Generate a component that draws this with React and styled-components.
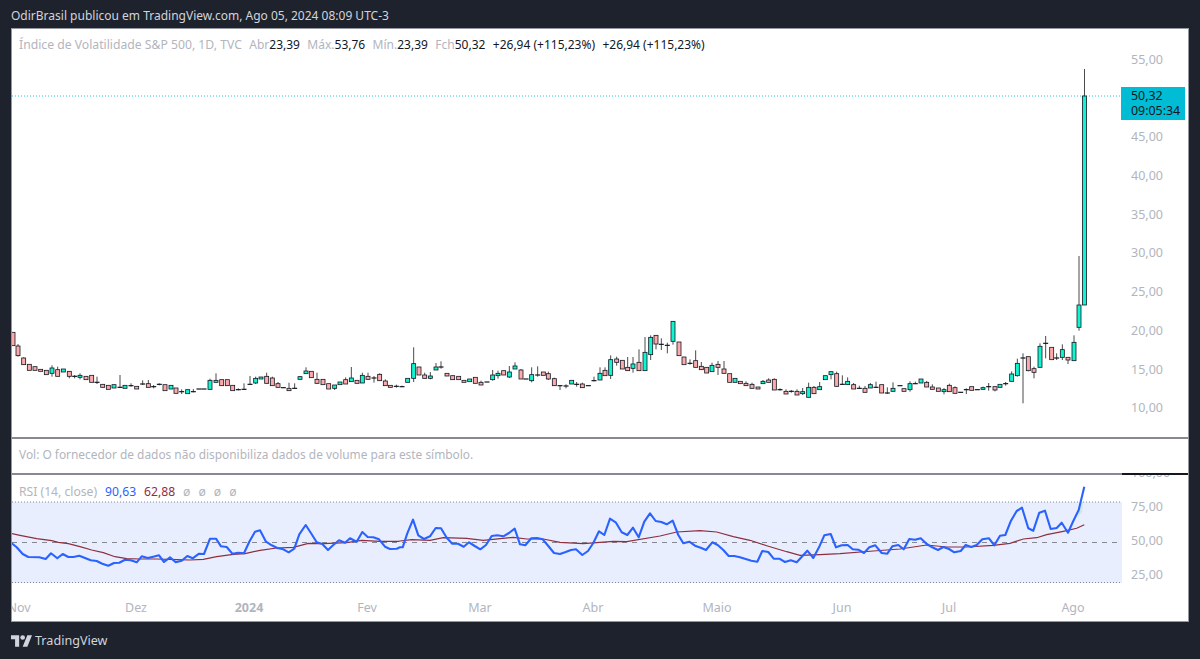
import styled, { createGlobalStyle } from "styled-components";

const FONT = `"Noto Sans", "Open Sans", sans-serif`;

const GlobalStyle = createGlobalStyle`
  html, body {
    margin: 0;
    background-color: #1e222d;
  }
  * {
    box-sizing: border-box;
  }
`;

const Page = styled.div`
  width: 1200px;
  height: 659px;
  overflow: hidden;
  display: flex;
  flex-direction: column;
  background-color: #1e222d;
  font-family: ${FONT};
`;

const Header = styled.div`
  height: 28px;
  padding: 8px 0 0 11px;
  font-size: 12px;
  line-height: 16px;
  color: #d1d4dc;
`;

const Frame = styled.div`
  margin: 0 11px;
  height: 594px;
  display: flex;
  flex-direction: column;
  background-color: #fff;
  border: 1px solid #9598a1;
`;

const Pane = styled.div`
  display: flex;
  height: ${(p) => p.$height}px;
  position: relative;
`;

const Plot = styled.div`
  width: 1110px;
  height: 100%;
  position: relative;

  svg {
    display: block;
  }
`;

const Divider = styled.div`
  height: 2px;
  display: flex;
  justify-content: flex-end;
  background-color: #868993;
`;

const DividerEnd = styled.div`
  width: 66px;
  background-color: #131722;
`;

const Legend = styled.div`
  position: absolute;
  top: ${(p) => p.$top}px;
  left: 7px;
  display: flex;
  gap: ${(p) => p.$gap}px;
  font-size: ${(p) => p.$size}px;
  line-height: 16px;
  white-space: nowrap;
`;

const Muted = styled.span`
  color: #b2b5be;
`;

const SymbolTitle = styled(Muted)`
  font-size: 12.2px;
`;

const Value = styled.span`
  color: ${(p) => p.$color || "#131722"};
`;

const Pair = styled.span`
  display: inline-flex;
`;

const VolNote = styled.div`
  padding: 7px 0 0 7px;
  font-size: 11.9px;
  line-height: 16px;
  color: #b2b5be;
`;

const PriceAxis = styled.div`
  flex: 1;
  overflow: hidden;
  display: flex;
  flex-direction: column;
  padding-top: ${(p) => p.$top}px;
`;

const PriceLabel = styled.div`
  flex: none;
  height: ${(p) => p.$step}px;
  line-height: ${(p) => p.$step}px;
  padding-left: 9px;
  font-size: 12.5px;
  color: #b2b5be;
`;

const RsiLabels = styled.div`
  margin-top: -19px;
`;

const PriceTag = styled.div`
  position: absolute;
  top: 58px;
  left: 1109px;
  width: 64px;
  height: 33px;
  padding: 1px 0 0 10px;
  background-color: #00bcd4;
  color: #131722;
  font-size: 12.4px;
  line-height: 15px;
`;

const TimeAxis = styled.div`
  position: relative;
  height: 23px;
  overflow: hidden;
`;

const TimeLabel = styled.span`
  position: absolute;
  top: 1px;
  transform: translateX(-50%);
  font-size: 12.5px;
  line-height: 18px;
  font-weight: ${(p) => (p.$bold ? 700 : 400)};
  color: #b2b5be;
`;

const Footer = styled.div`
  flex: 1;
  display: flex;
  align-items: center;
  gap: 3px;
  padding: 0 0 0 11px;
  color: #d1d4dc;
  font-size: 12.6px;
`;

const candleGroups = [
  { ox: 0, oy: 320, rows: [
    ["r",39,37,77],["r",54,78,107,72,110],["r",71,114,134,112],["r",88,133,151],["r",105,140,151],
    ["r",122,148,154],["r",139,151,164],["g",156,144,160,136,170],["r",173,149,169,140],["g",190,147,156],
    ["r",208,154,169,154,175],["d",224,169,169,165,175],["g",240,166,172,160,178],["r",258,169,179],["r",275,166,187],
    ["d",291,187,187,170,192],["r",308,193,202],["r",325,196,208],["g",342,194,204],["d",360,202,202,165,204],
    ["g",375,196,205],["d",393,197,197,190,200],["r",410,199,207],["d",428,192,192,181,195],["r",445,191,202,180],
    ["d",461,200,200,195,205],["d",478,193,193,190,196],["r",495,194,212],["g",513,196,207],["r",528,204,220],
    ["d",545,215,215,208,222],["g",563,209,221],["d",580,215,215,207,217],["d",597,207,207],["d",612,207,207],
    ["g",630,181,208,176],["g",648,181,187,160],["r",665,179,197],["r",682,179,197],["r",698,196,212],
    ["d",715,209,209,205,211],["d",732,208,208,190,210],["d",750,193,193,168,195],["g",767,175,189,170,192],["g",783,171,177],
    ["r",800,169,190,158],["r",817,174,197,170],["r",834,191,202,186],["d",850,203,203],["r",867,205,212,188],
    ["d",884,205,205,190,207],
  ]},
  { ox: 300, oy: 320, rows: [
    ["g",0,170,178,168],["g",18,153,161,142],["r",34,154,173],["r",51,178,190,158],["r",69,178,194],
    ["r",86,191,207],["g",104,195,205,195,210],["g",120,186,194],["r",137,179,192,172],["g",154,174,185,141],
    ["r",171,181,190],["g",187,166,189,158],["r",204,169,178,158],["d",222,174,174,168,188],["r",239,163,182,160],
    ["r",256,183,197,178],["r",271,196,202],["d",289,199,199,194,203],["d",306,200,200,197,201],["g",323,175,187],
    ["g",341,131,175,82,186],["r",357,141,165],["r",374,165,175,158],["g",391,168,175,156,178],["g",408,141,150,129],
    ["d",423,141,141,124,146],["r",441,160,168],["r",458,167,179],["r",476,169,179],["r",492,181,187],
    ["g",509,177,185],["r",526,172,190],["r",543,187,195,182],["d",561,186,186],["g",578,165,179,150,182],
    ["g",594,160,167,152,176],["r",611,152,165],["g",628,156,171,138,174],["g",645,138,147,127],["r",663,150,177,147],
    ["d",678,177,177],["g",695,164,182,142,187],["d",713,165,165,139,170],["r",730,156,166],["r",745,161,177,155,180],
    ["r",763,176,197,173],["d",780,197,197,197,210],["d",798,198,198,193,205],["g",815,181,192],["d",830,193,193,186,200],
    ["r",847,192,203,188],["d",865,197,197],["d",882,182,182,170,184],
  ]},
  { ox: 600, oy: 310, rows: [
    ["g",0,190,210,172],["r",15,181,197,172],["g",32,149,196,136,207],["r",50,147,157,140,167],["r",67,151,177],
    ["r",83,172,182,141],["g",99,162,175,141,188],["r",117,157,182,118],["g",135,127,182,81],["g",152,82,134,76,150],
    ["r",168,76,102,76,118],["d",184,103,103,85,120],["d",202,106,106,98,130],["g",219,34,94,34,104],["r",237,96,137],
    ["r",252,141,164],["d",270,160,160,148,164],["r",287,152,172,121],["r",304,169,179,156],["r",320,172,189],
    ["g",336,166,185,158],["r",354,163,172,153,195],["r",372,177,190,153],["r",389,191,217],["g",405,205,217],
    ["r",421,214,221],["r",438,220,227,214],["r",456,223,235,218],["r",474,231,237],["g",489,214,221,210],
    ["r",506,210,217,205],["r",523,208,240,205],["d",540,239,239,235,242],["r",558,244,252,238],["d",574,244,244,240,248],
    ["r",591,244,255,238],["g",608,245,251,234,255],["g",626,232,262,218],["r",642,232,251,228],["g",659,230,239,216],
    ["g",676,197,209],["g",693,185,194,185,208],["r",710,191,229,185],["d",727,223,223,196,224],["g",743,214,224,202],
    ["r",761,224,237,219],["d",778,235,235,227,236],["r",795,235,247,228],["g",811,224,234,219],["d",828,232,232,215,233],
    ["r",845,224,249],["d",862,249,249,232,252],["g",879,235,244,217],
  ]},
  { ox: 900, oy: 240, rows: [
    ["d",0,437,437],["r",12,446,454],["g",30,431,449,424,455],["d",46,431,431,425,432],["g",63,417,429],
    ["r",80,427,441,423],["r",97,441,448,433],["r",115,444,454],["g",132,449,455,444,463],["r",148,436,455,431],
    ["r",165,443,460,439],["d",182,457,457],["d",199,449,449,445,462],["r",215,440,451],["d",232,449,449],
    ["g",249,443,448,440],["d",266,440,440,429,452],["r",285,440,450,440,454],["g",300,433,442],["d",317,431,431,426,437],
    ["g",335,402,424,394],["g",352,370,407,356,410],["d",369,354,354,340,490],["r",385,350,392,350,394],["r",402,386,397,380,415],
    ["g",420,319,382,310],["d",437,310,310,288,355],["r",455,322,359],["d",470,354,354,340,360],["g",487,329,352,313,360],
    ["r",504,352,360,352,372],["g",522,307,362,286],["g",537,195,262,48,272],
  ]},
];

const candles = candleGroups.flatMap(({ ox, oy, rows }) =>
  rows.map(([kind, x, top, bottom, wickTop = top, wickBottom = bottom]) => ({
    kind,
    x: ox + x / 3,
    top: oy + top / 3,
    bottom: oy + bottom / 3,
    wickTop: oy + wickTop / 3,
    wickBottom: oy + wickBottom / 3,
  }))
);

candles.push({ kind: "g", x: 1084.5, top: 96, bottom: 305, wickTop: 69, wickBottom: 305 });

const toPoints = (ox, oy, pts) => pts.map(([x, y]) => [ox + x / 3, oy + y / 3]);

const rsiLine = [
  ...toPoints(0, 430, [[33,338],[50,352],[68,372],[85,381],[118,382],[137,387],[153,370],[172,385],[188,372],[205,381],[220,381],[238,377],[255,384],[272,391],[290,393],[307,401],[325,407],[342,399],[358,398],[375,389],[392,391],[410,397],[425,379],[443,384],[460,380],[477,376],[492,396],[510,382],[527,397],[545,392],[562,378],[578,385],[597,371],[612,372],[630,326],[648,326],[663,349],[680,351],[697,371],[715,368],[732,370],[748,335],[765,305],[780,301],[798,335],[815,346],[832,354],[850,358],[866,367],[883,356],[898,313],[917,285],[935,313],[950,337],[967,342],[984,360],[1000,345],[1017,331],[1035,338],[1050,325],[1070,335],[1087,306],[1103,321],[1120,322],[1137,328],[1155,350],[1170,357],[1190,356]]),
  ...toPoints(400, 470, [[0,232],[8,232],[22,190],[39,149],[55,196],[72,207],[90,199],[107,174],[123,175],[140,203],[157,221],[174,221],[191,230],[207,217],[224,228],[241,238],[258,225],[275,198],[292,196],[310,199],[327,189],[344,176],[360,223],[376,226],[394,205],[411,204],[428,208],[445,228],[462,249],[480,252],[497,246],[513,240],[528,238],[547,255],[564,243],[580,219],[597,184],[613,195],[630,146],[648,158],[665,187],[682,195],[699,173],[716,202],[733,155],[750,130],[767,153],[784,156],[800,163],[818,152],[835,195],[850,220],[868,215],[885,227],[902,233],[918,240],[937,217],[953,225],[970,240],[986,258],[1003,258],[1020,262],[1037,267],[1054,272],[1072,275],[1087,243],[1105,246],[1121,266],[1138,266],[1155,276],[1172,271],[1190,277]]),
  ...toPoints(800, 430, [[0,386],[22,362],[40,384],[57,352],[73,316],[92,312],[108,352],[125,346],[143,345],[158,358],[175,359],[192,369],[208,352],[226,346],[245,369],[262,371],[277,349],[295,345],[311,358],[328,327],[345,329],[362,325],[380,342],[397,352],[414,360],[430,351],[447,357],[463,367],[482,363],[497,345],[514,351],[530,345],[547,328],[567,325],[583,346],[600,317],[616,315],[632,274],[650,243],[666,233],[685,295],[700,302],[718,248],[735,242],[752,297],[770,294],[785,278],[804,308],[820,273],[836,240],[853,170]]),
];

const maLine = [
  ...toPoints(0, 430, [[33,310],[60,316],[110,326],[155,332],[175,337],[205,341],[240,350],[275,360],[310,368],[345,380],[380,386],[420,387],[470,387],[530,389],[570,390],[610,388],[650,380],[700,373],[735,371],[780,361],[830,354],[880,352],[925,340],[970,341],[1040,338],[1085,331],[1140,334],[1195,334]]),
  ...toPoints(400, 470, [[0,213],[35,209],[90,211],[130,203],[200,205],[250,211],[340,202],[380,207],[430,207],[480,217],[550,221],[640,214],[680,215],[780,198],[830,186],[900,182],[950,186],[1000,200],[1050,211],[1100,227],[1160,245]]),
  ...toPoints(800, 430, [[0,376],[60,374],[120,371],[220,363],[300,357],[380,345],[440,351],[500,351],[580,346],[630,340],[670,327],[710,323],[740,314],[790,304],[830,295],[853,284]]),
];

const asPath = (pts) => pts.map(([x, y]) => `${x.toFixed(1)},${y.toFixed(1)}`).join(" ");

const BODY_FILL = { g: "#10f5d0", r: "#fcaaaa" };

function Candle({ kind, x, top, bottom, wickTop, wickBottom }) {
  return (
    <g>
      {(wickTop < top || wickBottom > bottom) && (
        <line x1={x} x2={x} y1={wickTop} y2={wickBottom} stroke="#4a4a4a" strokeWidth="1" />
      )}
      {kind === "d" ? (
        <line x1={x - 2.5} x2={x + 2.5} y1={top} y2={top} stroke="#131722" strokeWidth="1.2" />
      ) : (
        <rect
          x={x - 2}
          y={top}
          width="4"
          height={bottom - top}
          fill={BODY_FILL[kind]}
          stroke="#131722"
          strokeWidth="0.8"
        />
      )}
    </g>
  );
}

function PriceChart() {
  return (
    <svg width="1110" height="408" viewBox="12 29 1110 408">
      <line x1="12" x2="1122" y1="96" y2="96" stroke="#26c6da" strokeWidth="1" strokeDasharray="1 2" />
      {candles.map((c, i) => (
        <Candle key={i} {...c} />
      ))}
    </svg>
  );
}

function RsiChart() {
  return (
    <svg width="1110" height="123" viewBox="12 475 1110 123">
      <rect x="12" y="502" width="1110" height="81" fill="#e8eefe" />
      <line x1="12" x2="1122" y1="502" y2="502" stroke="#868993" strokeDasharray="1 2" />
      <line x1="12" x2="1122" y1="582.5" y2="582.5" stroke="#868993" strokeDasharray="1 2" />
      <line x1="12" x2="1122" y1="542.5" y2="542.5" stroke="#868993" strokeDasharray="5 5" />
      <polygon points="1078,517 1081,502 1083,502 1082,512" fill="#cfe8e0" />
      <polyline points={asPath(maLine)} fill="none" stroke="#8e2f3f" strokeWidth="1.2" />
      <polyline points={asPath(rsiLine)} fill="none" stroke="#2962ff" strokeWidth="2.1" strokeLinejoin="round" />
    </svg>
  );
}

function TvLogo() {
  return (
    <svg width="21" height="12" viewBox="0 0 36 20" fill="#d1d4dc">
      <path d="M14 20H7V7H0V0h14v20zM28 20h-8L28 0h8l-8 20z" />
      <circle cx="20" cy="4" r="4" />
    </svg>
  );
}

const MAIN_PRICES = ["55,00", "", "45,00", "40,00", "35,00", "30,00", "25,00", "20,00", "15,00", "10,00"];
const RSI_PRICES = ["100,00", "75,00", "50,00", "25,00"];

const TIME_TICKS = [
  { label: "Nov", x: 7 },
  { label: "Dez", x: 124 },
  { label: "2024", x: 237, bold: true },
  { label: "Fev", x: 355 },
  { label: "Mar", x: 468 },
  { label: "Abr", x: 581 },
  { label: "Maio", x: 705 },
  { label: "Jun", x: 830 },
  { label: "Jul", x: 937 },
  { label: "Ago", x: 1061 },
];

const CHANGE = "+26,94 (+115,23%)";

export default function App() {
  return (
    <Page>
      <GlobalStyle />
      <Header>OdirBrasil publicou em TradingView.com, Ago 05, 2024 08:09 UTC-3</Header>
      <Frame>
        <Pane $height={408}>
          <Plot>
            <PriceChart />
            <Legend $top={8} $gap={7.4} $size={12}>
              <SymbolTitle>Índice de Volatilidade S&amp;P 500, 1D, TVC</SymbolTitle>
              <Pair><Muted>Abr</Muted><Value>23,39</Value></Pair>
              <Pair><Muted>Máx.</Muted><Value>53,76</Value></Pair>
              <Pair><Muted>Mín.</Muted><Value>23,39</Value></Pair>
              <Pair><Muted>Fch</Muted><Value>50,32</Value></Pair>
              <Value>{CHANGE}</Value>
              <Value>{CHANGE}</Value>
            </Legend>
          </Plot>
          <PriceAxis $top={11.5}>
            {MAIN_PRICES.map((p, i) => (
              <PriceLabel key={i} $step={38.75}>{p}</PriceLabel>
            ))}
          </PriceAxis>
          <PriceTag>
            50,32
            <br />
            09:05:34
          </PriceTag>
        </Pane>
        <Divider />
        <Pane $height={34}>
          <VolNote>Vol: O fornecedor de dados não disponibiliza dados de volume para este símbolo.</VolNote>
        </Pane>
        <Divider>
          <DividerEnd />
        </Divider>
        <Pane $height={123}>
          <Plot>
            <RsiChart />
            <Legend $top={9} $gap={8} $size={12.15}>
              <Muted>RSI (14, close)</Muted>
              <Value $color="#2962ff">90,63</Value>
              <Value $color="#8e2f3f">62,88</Value>
              <Muted>ø</Muted>
              <Muted>ø</Muted>
              <Muted>ø</Muted>
              <Muted>ø</Muted>
            </Legend>
          </Plot>
          <PriceAxis $top={0}>
            <RsiLabels>
              {RSI_PRICES.map((p) => (
                <PriceLabel key={p} $step={34}>{p}</PriceLabel>
              ))}
            </RsiLabels>
          </PriceAxis>
        </Pane>
        <TimeAxis>
          {TIME_TICKS.map((t) => (
            <TimeLabel key={t.label} $bold={t.bold} style={{ left: t.x }}>
              {t.label}
            </TimeLabel>
          ))}
        </TimeAxis>
      </Frame>
      <Footer>
        <TvLogo />
        TradingView
      </Footer>
    </Page>
  );
}
